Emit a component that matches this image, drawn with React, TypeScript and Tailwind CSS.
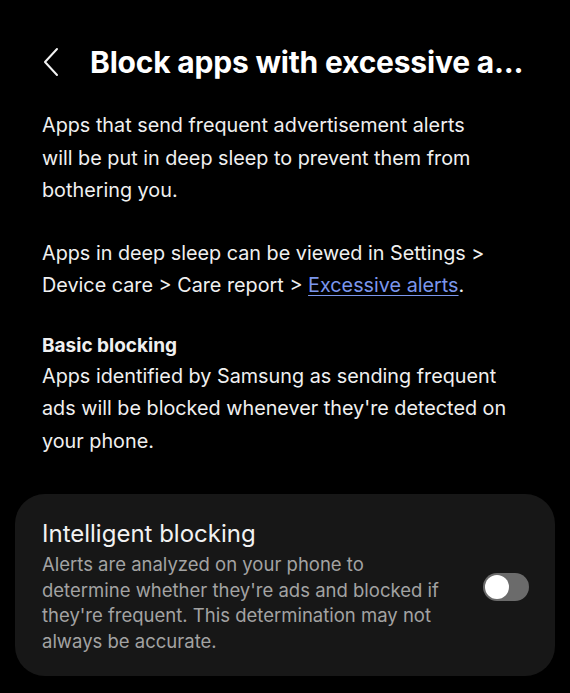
export default function App() {
  return (
    <div
      className="w-[570px] h-[693px] bg-black text-[#f0f0f0] overflow-hidden"
      style={{ fontFamily: 'Inter, Roboto, "Noto Sans", sans-serif' }}
    >
      {/* header */}
      <div className="flex items-center pt-[42px] h-[82px]">
        <button className="w-[90px] flex justify-center pl-[12px] shrink-0">
          <svg width="18" height="30" viewBox="0 0 18 30" fill="none">
            <path d="M15 2 L3 15 L15 28" stroke="#f2f2f2" strokeWidth="2" strokeLinecap="round" strokeLinejoin="round" />
          </svg>
        </button>
        <h1 className="text-[30px] leading-[40px] font-bold text-white whitespace-nowrap tracking-[-0.2px]">
          Block apps with excessive a...
        </h1>
      </div>

      <div className="px-[42px] pt-[27px] text-[19.8px] leading-[32.5px]">
        <p>
          Apps that send frequent advertisement alerts
          <br />
          will be put in deep sleep to prevent them from
          <br />
          bothering you.
        </p>
        <p className="mt-[30px]">
          Apps in deep sleep can be viewed in Settings &gt;
          <br />
          Device care &gt; Care report &gt;{' '}
          <a className="text-[#7b96ec] underline underline-offset-[3px]">Excessive alerts</a>.
        </p>
        <div className="mt-[30px]">
          <h2 className="font-bold text-[19px] leading-[28px]">Basic blocking</h2>
          <p>
            Apps identified by Samsung as sending frequent
            <br />
            ads will be blocked whenever they're detected on
            <br />
            your phone.
          </p>
        </div>
      </div>

      {/* intelligent blocking card */}
      <div className="mx-[15px] mt-[37px] rounded-[30px] bg-[#171717] pl-[27px] pr-[26px] pt-[24px] pb-[21px] flex items-center gap-4">
        <div className="flex-1">
          <div className="text-[24px] leading-[32px] text-[#f2f2f2]">Intelligent blocking</div>
          <p className="mt-[2px] text-[18.5px] leading-[25.7px] text-[#a3a3a3]">
            Alerts are analyzed on your phone to
            <br />
            determine whether they're ads and blocked if
            <br />
            they're frequent. This determination may not
            <br />
            always be accurate.
          </p>
        </div>
        <div className="w-[46px] h-[28px] rounded-full bg-[#6b6b6b] flex items-center px-[2px] shrink-0 mt-[2px]">
          <div className="w-[24px] h-[24px] rounded-full bg-white" />
        </div>
      </div>
    </div>
  );
}
